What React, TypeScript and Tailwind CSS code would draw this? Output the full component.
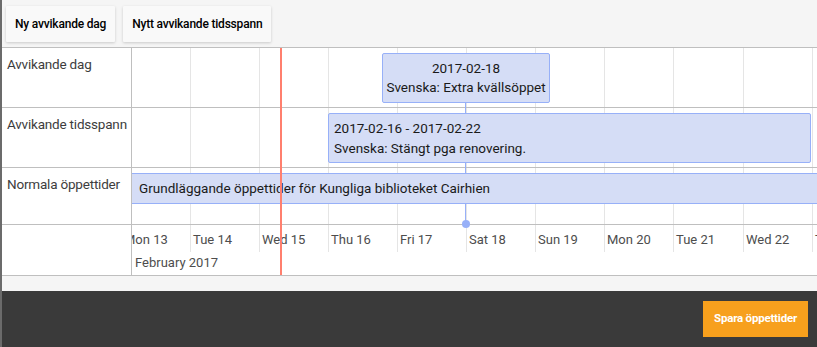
import React from 'react';

const days = ['Mon 13', 'Tue 14', 'Wed 15', 'Thu 16', 'Fri 17', 'Sat 18', 'Sun 19', 'Mon 20', 'Tue 21', 'Wed 22', 'Thu 23'];

// px per day on the visible range
const DAY = 69.1;
const ORIGIN = -11.4;

const groups = [
    { label: 'Avvikande dag', h: 'h-[60px]' },
    { label: 'Avvikande tidsspann', h: 'h-[60px]' },
    { label: 'Normala öppettider', h: 'h-[57px]' },
];

function ToolButton({ children }: { children: React.ReactNode }) {
    return (
        <button className="h-[36px] px-[9px] bg-[#f9f9f9] text-[12px] font-medium tracking-[-0.2px] text-black rounded-[1px] shadow-[0_1px_3px_rgba(0,0,0,0.18)] whitespace-nowrap">
            {children}
        </button>
    );
}

export default function App() {
    return (
        <div className="w-[817px] h-[347px] flex flex-col bg-[#f5f5f5] border-l-2 border-[#6b6b6b] overflow-hidden font-['Roboto',sans-serif]">
            {/* Toolbar */}
            <div className="h-[47px] flex items-start gap-[8px] pt-[6px] pl-[4px]">
                <ToolButton>Ny avvikande dag</ToolButton>
                <ToolButton>Nytt avvikande tidsspann</ToolButton>
            </div>

            {/* Timeline */}
            <div className="h-[229px] flex bg-white border-y border-[#bfbfbf]">
                <div className="w-[130px] shrink-0 flex flex-col border-r border-[#bfbfbf] text-[13.5px] tracking-[-0.2px] text-[#3d3d3d]">
                    {groups.map((g) => (
                        <div key={g.label} className={`${g.h} border-b border-[#bfbfbf] px-[5px] pt-[6px] leading-[20px] whitespace-nowrap`}>
                            {g.label}
                        </div>
                    ))}
                    <div className="flex-1" />
                </div>

                <div className="relative flex-1 overflow-hidden">
                    {/* minor grid */}
                    {days.map((d, i) =>
                        i === 0 ? null : (
                            <div
                                key={d}
                                className="absolute top-0 h-[204px] w-px bg-[#e5e5e5]"
                                style={{ left: Math.round(ORIGIN + DAY * i) }}
                            />
                        )
                    )}

                    {/* group rows */}
                    <div className="relative flex flex-col">
                        {groups.map((g) => (
                            <div key={g.label} className={`${g.h} border-b border-[#bfbfbf]`} />
                        ))}
                    </div>

                    {/* axis */}
                    {days.map((d, i) => (
                        <div
                            key={d + 'l'}
                            className="absolute top-[182px] pl-[3px] text-[13px] leading-[20px] text-[#4d4d4d] whitespace-nowrap"
                            style={{ left: Math.round(ORIGIN + DAY * i) }}
                        >
                            {d}
                        </div>
                    ))}
                    <div className="absolute left-[3px] top-[205px] text-[13px] leading-[20px] text-[#4d4d4d]">February 2017</div>

                    {/* box item line + dot */}
                    <div className="absolute left-[333px] top-[55px] h-[121px] w-px bg-[#97b0f8]" />
                    <div className="absolute left-[330px] top-[172px] w-[8px] h-[8px] rounded-full bg-[#97b0f8]" />

                    {/* items */}
                    <div className="absolute left-[250px] top-[5px] w-[168px] h-[50px] bg-[#d5ddf6] border border-[#97b0f8] rounded-[2px] flex flex-col items-center justify-center text-[13.5px] leading-[19px] text-[#1a1a1a] whitespace-nowrap">
                        <span>2017-02-18</span>
                        <span>Svenska: Extra kvällsöppet</span>
                    </div>
                    <div className="absolute left-[196px] top-[65px] w-[483px] h-[50px] bg-[#d5ddf6] border border-[#97b0f8] rounded-[2px] flex flex-col justify-center px-[5px] text-[13.5px] leading-[20px] text-[#1a1a1a] whitespace-nowrap">
                        <span>2017-02-16 - 2017-02-22</span>
                        <span>Svenska: Stängt pga renovering.</span>
                    </div>
                    <div className="absolute -left-px top-[125px] w-[800px] h-[31px] bg-[#d5ddf6] border border-[#97b0f8] flex items-center px-[7px] text-[13.5px] text-[#1a1a1a] whitespace-nowrap">
                        Grundläggande öppettider för Kungliga biblioteket Cairhien
                    </div>

                    {/* current time */}
                    <div className="absolute left-[148px] top-0 bottom-0 w-[2px] bg-[#ff7f6e]" />
                </div>
            </div>

            <div className="h-[15px]" />

            {/* Footer */}
            <div className="flex-1 bg-[#3a3a3a] flex justify-end items-start pt-[10px] pr-[9px]">
                <button className="h-[36px] w-[105px] bg-[#f7a01d] text-white text-[11.5px] font-bold tracking-[-0.2px] whitespace-nowrap">
                    Spara öppettider
                </button>
            </div>
        </div>
    );
}
